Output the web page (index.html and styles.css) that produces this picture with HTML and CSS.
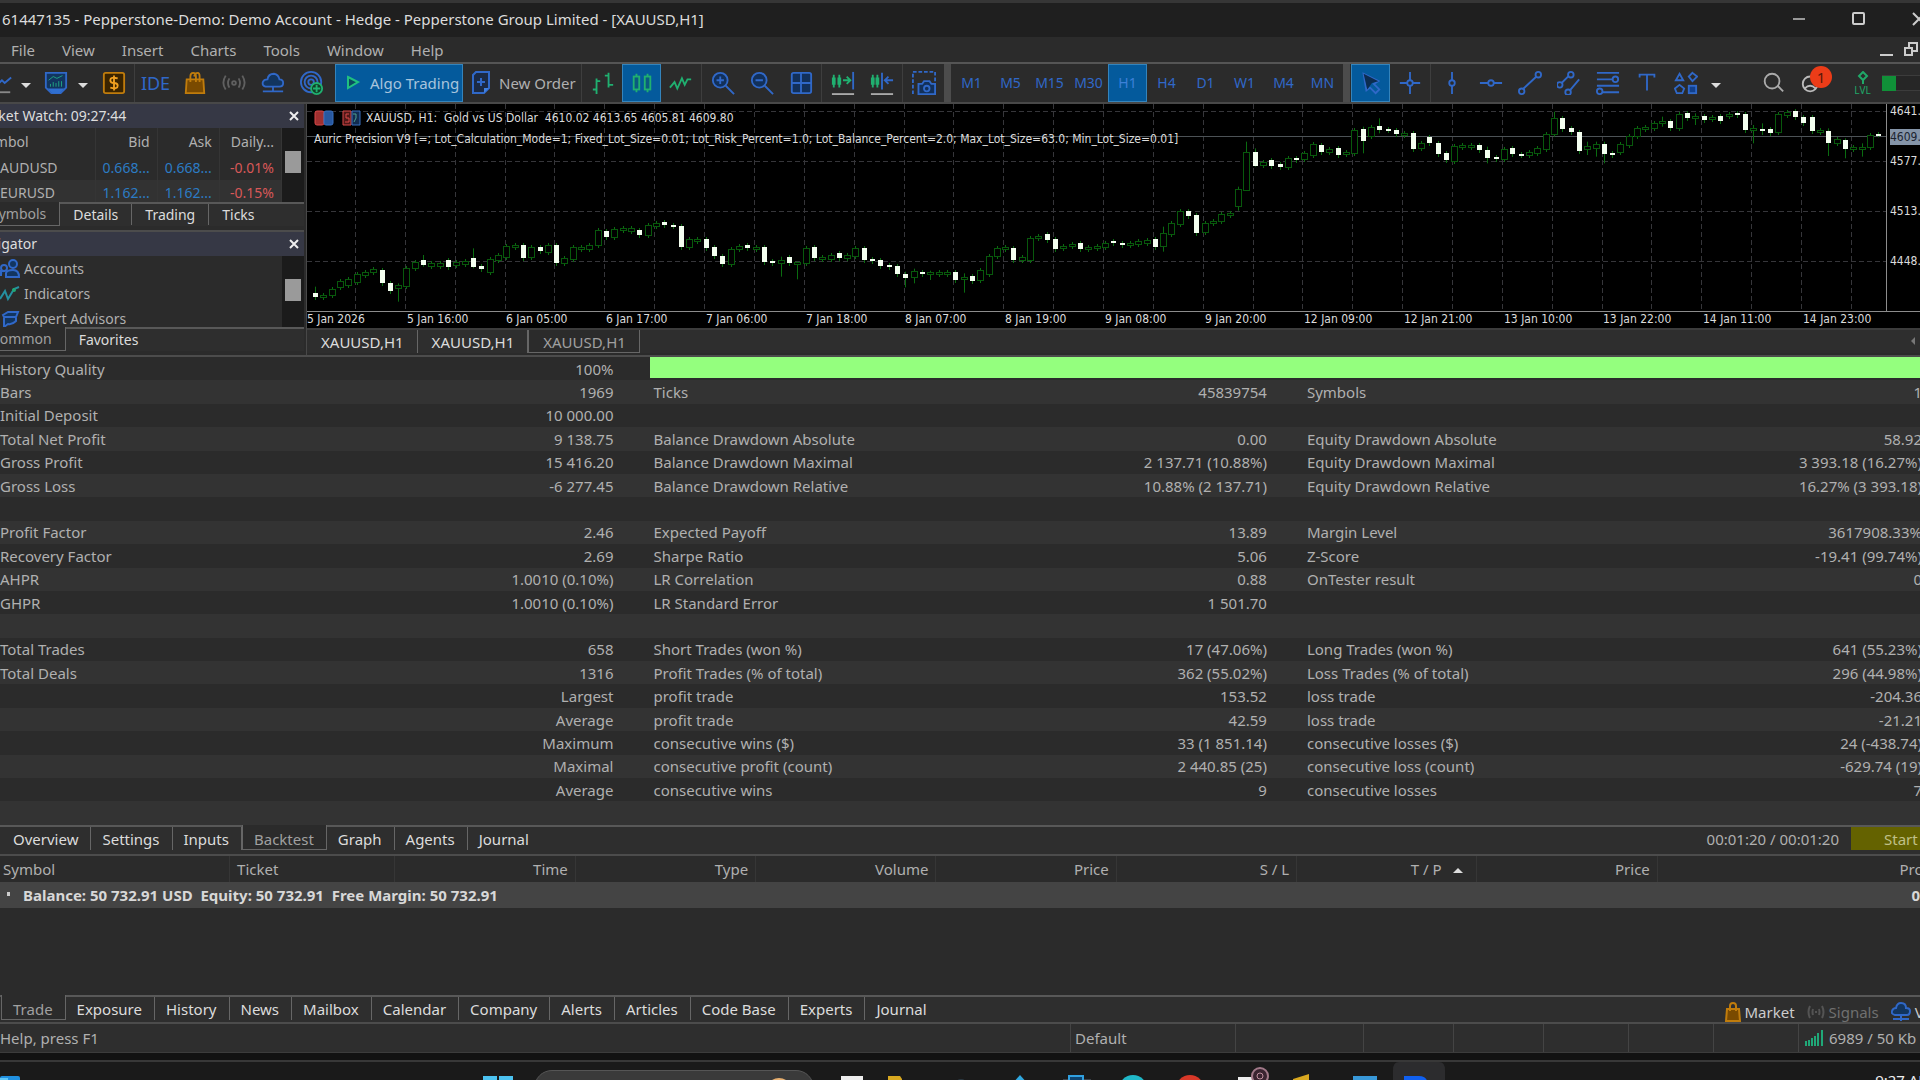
FILE: index.html
```html
<!DOCTYPE html>
<html lang="en">
<head>
<meta charset="utf-8">
<title>61447135 - Pepperstone-Demo: Demo Account - Hedge</title>
<link rel="stylesheet" href="styles.css">
</head>
<body>
<div class="app">
  <header class="titlebar">
    <h1 class="title">61447135 - Pepperstone-Demo: Demo Account - Hedge - Pepperstone Group Limited - [XAUUSD,H1]</h1>
    <div class="win-buttons">
      <button class="win-btn" aria-label="Minimize"><svg width="14" height="16"><path d="M1 8H13" stroke="#999" stroke-width="2"/></svg></button>
      <button class="win-btn" aria-label="Maximize"><svg width="14" height="16"><rect x="1" y="2" width="11" height="11" rx="1" fill="none" stroke="#ccc" stroke-width="2"/></svg></button>
      <button class="win-btn" aria-label="Close"><svg width="14" height="16"><path d="M1 2L13 14M13 2L1 14" stroke="#ccc" stroke-width="2"/></svg></button>
    </div>
  </header>

  <nav class="menubar">
    <button class="menu">File</button><button class="menu">View</button><button class="menu">Insert</button><button class="menu">Charts</button><button class="menu">Tools</button><button class="menu">Window</button><button class="menu">Help</button>
    <div class="mdi">
      <button class="mdi-btn" aria-label="Minimize chart"><svg width="14" height="16"><path d="M0 13H13" stroke="#ccc" stroke-width="2"/></svg></button>
      <button class="mdi-btn" aria-label="Restore chart"><svg width="14" height="16"><path d="M5 6V1H13V9H8M1 6H8V13H1Z" fill="none" stroke="#ccc" stroke-width="2"/></svg></button>
    </div>
  </nav>

  <div class="toolbar">
    <button class="tool tool-cut" aria-label="Chart type"><svg class="ic" viewBox="0 0 26 26"><path d="M7 17L14 10L17 13L24 7" class="b"/><path d="M7 23H23" stroke="#888" stroke-width="2"/></svg></button>
    <button class="caret caret-wide" aria-label="Chart menu"></button>
    <button class="tool tool-mid" aria-label="Templates"><svg class="ic" viewBox="0 0 26 26"><path d="M2 2H24V18L18 24H8L2 18Z" fill="#12355f" class="b"/><path d="M4 19H22L17 24H9Z" fill="#2f6fd0"/><path d="M5 10L10 6L14 8L20 5" class="g1"/><path d="M7 17V14M10 17V12M13 17V13M16 17V11M19 17V11" class="g1"/></svg></button>
    <button class="caret" aria-label="Templates menu"></button>
    <button class="tool" aria-label="Quotes"><svg class="ic" viewBox="0 0 26 26"><rect x="2" y="2" width="22" height="22" rx="2" fill="#3a2400" class="o"/><path d="M17 8Q9 6 9 10Q9 13 13 13Q17 13 17 16Q17 20 9 18M13 5V21" fill="none" stroke="#f0a020" stroke-width="2"/></svg></button>
    <i class="sep"></i>
    <button class="tool ide">IDE</button>
    <button class="tool" aria-label="Market"><svg class="ic" viewBox="0 0 26 26"><path d="M4 9H22L23 24H3Z" fill="#7a4a00" class="o"/><path d="M8 12V6Q8 2 11 2Q14 2 14 6V12M12 6Q13 2 16 2Q18 2 18 6V12" fill="none" class="o"/></svg></button>
    <button class="tool" aria-label="Signals"><svg class="ic" viewBox="0 0 26 26"><g fill="none" stroke="#606060" stroke-width="2"><path d="M4 5Q-1 13 4 20M22 5Q27 13 22 20M8 8Q5 13 8 18M18 8Q21 13 18 18"/><circle cx="13" cy="13" r="2"/></g></svg></button>
    <button class="tool" aria-label="VPS"><svg class="ic" viewBox="0 0 26 26"><path d="M5 17Q1 16 2 12Q3 9 7 9Q8 3 14 3Q19 4 20 9Q24 9 24 13Q24 17 20 17Z" fill="#12355f" class="b"/><path d="M13 17V22M2 22H24" class="b"/></svg></button>
    <button class="tool tool-last" aria-label="Community"><svg class="ic" viewBox="0 0 26 26"><g class="b" fill="none"><circle cx="12" cy="12" r="11"/><circle cx="12" cy="12" r="7"/><circle cx="12" cy="12" r="3"/></g><circle cx="18" cy="19" r="6" fill="#123d25" class="g"/><path d="M18 15V23M14 19H22" class="g"/></svg></button>
    <button class="algo on"><svg width="16" height="20" viewBox="0 0 16 20"><path d="M3 4L13 9L3 15Z" fill="#0a4a60" stroke="#20c080" stroke-width="2"/></svg>Algo Trading</button>
    <button class="order"><svg width="20" height="26" viewBox="0 0 20 26"><path d="M5 2H18V18L13 23H2V5Z" class="b" fill="#1b2a44"/><path d="M13 23V18H18Z" fill="#4080e0"/><path d="M10 8V16M6 12H14" class="b"/></svg>New Order</button>
    <i class="sep"></i>
    <button class="tool" aria-label="Bar chart"><svg class="ic" viewBox="0 0 26 26"><path d="M6 8V25M2 20H6M6 11H10M19 2V18M15 5H19M19 15H24" class="g"/></svg></button>
    <button class="tool on" aria-label="Candlesticks"><svg class="ic" viewBox="0 0 26 26"><path d="M7 3V23M19 3V23" class="g"/><rect x="4" y="6" width="6" height="14" fill="#0a5a80" class="g"/><rect x="16" y="6" width="6" height="14" fill="#0a5a80" class="g"/></svg></button>
    <button class="tool" aria-label="Line chart"><svg class="ic" viewBox="0 0 26 26"><path d="M1 18L6 12L9 19L14 8L17 15L20 9H24" class="g" fill="none"/></svg></button>
    <i class="sep"></i>
    <button class="tool" aria-label="Zoom in"><svg class="ic" viewBox="0 0 26 26"><circle cx="10" cy="10" r="8" fill="#12305a" class="b"/><path d="M16 16L25 25M6 10H14M10 6V14" class="b"/></svg></button>
    <button class="tool" aria-label="Zoom out"><svg class="ic" viewBox="0 0 26 26"><circle cx="10" cy="10" r="8" fill="#12305a" class="b"/><path d="M16 16L25 25M6 10H14" class="b"/></svg></button>
    <button class="tool" aria-label="Tile windows"><svg class="ic" viewBox="0 0 26 26"><rect x="3" y="2" width="21" height="22" rx="2" fill="#12305a" class="b"/><path d="M13 2V24M3 13H24" class="b"/></svg></button>
    <i class="sep"></i>
    <button class="tool" aria-label="Auto scroll"><svg class="ic" viewBox="0 0 26 26"><path d="M3 4V18M9 4V18M13 10H21M17 6L21 10L17 14" class="g" fill="none"/><path d="M1 7H5V15H1ZM7 7H11V15H7Z" fill="#20b070"/><path d="M24 1V20" class="b"/><path d="M1 25H25" stroke="#aaa" stroke-width="2"/></svg></button>
    <button class="tool" aria-label="Chart shift"><svg class="ic" viewBox="0 0 26 26"><path d="M3 4V18M8 4V18" class="g"/><path d="M1 7H5V15H1ZM6 7H10V15H6Z" fill="#20b070"/><path d="M13 2V20M25 10H17M20 6L16 10L20 14" class="b" fill="none"/><path d="M1 25H25" stroke="#aaa" stroke-width="2"/></svg></button>
    <i class="sep"></i>
    <button class="tool" aria-label="Screenshot"><svg class="ic" viewBox="0 0 26 26"><path d="M1 25V1H25V12" class="b" fill="none" stroke-dasharray="4 2"/><path d="M7 14H11L13 11H19L21 14H25V25H7Z" fill="#12305a" class="b"/><circle cx="16" cy="19" r="3" class="b" fill="none"/></svg></button>
    <i class="grip"></i>
    <button class="tool tf">M1</button><button class="tool tf">M5</button><button class="tool tf">M15</button><button class="tool tf">M30</button><button class="tool tf on">H1</button><button class="tool tf">H4</button><button class="tool tf">D1</button><button class="tool tf">W1</button><button class="tool tf">M4</button><button class="tool tf">MN</button>
    <i class="grip"></i>
    <button class="tool on" aria-label="Cursor"><svg class="ic" viewBox="0 0 26 26"><path d="M5 3L21 11L16 14L22 20L18 24L12 18L8 21Z" class="b"/><path d="M5 3L21 11L14 13L9 20Z" fill="#0c2c50"/></svg></button>
    <button class="tool" aria-label="Crosshair"><svg class="ic" viewBox="0 0 26 26"><path d="M13 1V10M13 16V25M2 13H10M16 13H24" class="b"/><circle cx="13" cy="13" r="3" class="b"/></svg></button>
    <i class="sep"></i>
    <button class="tool" aria-label="Vertical line"><svg class="ic" viewBox="0 0 26 26"><path d="M13 1V10M13 16V25" class="b"/><circle cx="13" cy="13" r="3" class="b" fill="none"/></svg></button>
    <button class="tool" aria-label="Horizontal line"><svg class="ic" viewBox="0 0 26 26"><path d="M1 13H10M16 13H25" class="b"/><circle cx="13" cy="13" r="3" class="b" fill="none"/></svg></button>
    <button class="tool" aria-label="Trend line"><svg class="ic" viewBox="0 0 26 26"><path d="M6 19L20 6" class="b"/><circle cx="4" cy="22" r="3" class="b" fill="none"/><circle cx="22" cy="4" r="3" class="b" fill="none"/></svg></button>
    <button class="tool" aria-label="Channel"><svg class="ic" viewBox="0 0 26 26"><path d="M5 13L13 5M14 21L24 9" class="b"/><circle cx="3" cy="15" r="3" class="b" fill="none"/><circle cx="15" cy="4" r="3" class="b" fill="none"/><circle cx="12" cy="23" r="3" class="b" fill="none"/></svg></button>
    <button class="tool" aria-label="Fibonacci"><svg class="ic" viewBox="0 0 26 26"><path d="M1 2H25M1 9H18M1 16H25M7 23H25" class="b"/><circle cx="21" cy="9" r="3" class="b" fill="none"/><circle cx="4" cy="22" r="3" class="b" fill="none"/></svg></button>
    <button class="tool" aria-label="Text"><svg class="ic" viewBox="0 0 26 26"><path d="M5 7V4H21V7M13 4V21" class="b" fill="none"/></svg></button>
    <button class="tool" aria-label="Shapes"><svg class="ic" viewBox="0 0 26 26"><path d="M6 3L10 10H2Z" class="b" fill="none"/><path d="M20 2L25 6L20 11L16 6Z" class="b" fill="none"/><path d="M6 15L11 19L9 24H3L1 19Z" class="b" fill="none"/><rect x="16" y="16" width="8" height="8" class="b" fill="#12408c"/></svg></button>
    <button class="caret" aria-label="Shapes menu"></button>
    <div class="tool-right">
      <button class="tool" aria-label="Search"><svg class="ic" viewBox="0 0 26 26"><circle cx="12" cy="11" r="8" fill="none" stroke="#aaa" stroke-width="2"/><path d="M18 16L24 22" stroke="#aaa" stroke-width="2"/></svg></button>
      <button class="tool account" aria-label="Account"><svg class="ic" viewBox="0 0 26 26"><circle cx="11" cy="14" r="8" fill="none" stroke="#bbb" stroke-width="2"/><path d="M5 19Q11 13 17 19" fill="none" stroke="#bbb" stroke-width="2"/></svg><span class="badge">1</span></button>
      <button class="tool lvl"><svg width="12" height="14" viewBox="0 0 12 14"><path d="M6 1L10 5L6 9L2 5ZM6 9V13" fill="none" stroke="#20a868" stroke-width="2"/></svg><span>LVL</span></button>
      <div class="meter"><i class="meter-fill"></i></div>
    </div>
  </div>

  <main class="workspace">
    <aside class="dock">
      <section class="panel">
        <div class="panel-head"><h2>Market Watch: 09:27:44</h2><button class="close" aria-label="Close Market Watch"><svg width="12" height="12"><path d="M2 2L10 10M10 2L2 10" stroke="#eee" stroke-width="2"/></svg></button></div>
        <div class="panel-body">
          <table class="quotes">
            <colgroup><col class="q-sym"><col class="q-num"><col class="q-num"><col class="q-num"></colgroup>
            <thead><tr><th class="q-name">Symbol</th><th class="num">Bid</th><th class="num">Ask</th><th class="num">Daily...</th></tr></thead>
            <tbody>
              <tr><td>AUDUSD</td><td class="num up">0.668...</td><td class="num up">0.668...</td><td class="num down">-0.01%</td></tr>
              <tr><td>EURUSD</td><td class="num up">1.162...</td><td class="num up">1.162...</td><td class="num down">-0.15%</td></tr>
            </tbody>
          </table>
          <div class="scroll"><i class="thumb"></i></div>
        </div>
        <div class="tabs tabs-dock"><button class="tab sel">Symbols</button><button class="tab">Details</button><button class="tab">Trading</button><button class="tab">Ticks</button></div>
      </section>
      <section class="panel">
        <div class="panel-head"><h2>Navigator</h2><button class="close" aria-label="Close Navigator"><svg width="12" height="12"><path d="M2 2L10 10M10 2L2 10" stroke="#eee" stroke-width="2"/></svg></button></div>
        <div class="panel-body">
          <ul class="tree">
            <li><svg width="20" height="20" viewBox="0 0 20 20"><circle cx="13" cy="5" r="4" fill="#12355f" class="b"/><path d="M6 18V14Q7 11 13 11Q19 11 19 18ZM1 17V12H5" fill="#12355f" class="b"/><circle cx="4" cy="9" r="3" class="b" fill="none"/></svg>Accounts</li>
            <li><svg width="20" height="20" viewBox="0 0 20 20"><path d="M0 15L5 7L8 15L14 5L19 3" fill="none" stroke="#2590a0" stroke-width="2"/><circle cx="14" cy="6" r="2" fill="#20a878"/></svg>Indicators</li>
            <li><svg width="20" height="20" viewBox="0 0 20 20"><path d="M3 6L8 3H18L16 8H4ZM4 8H16V12Q12 16 8 15L4 18Z" fill="#12355f" class="b"/></svg>Expert Advisors</li>
          </ul>
          <div class="scroll"><i class="thumb thumb-nav"></i></div>
        </div>
        <div class="tabs tabs-dock"><button class="tab sel">Common</button><button class="tab">Favorites</button></div>
      </section>
    </aside>

    <section class="charts">
      <div class="chart">
        <div class="plot-row">
          <div class="plot" id="plot">
            <div class="chart-info">
              <div class="chart-title">
                <svg width="20" height="16" viewBox="0 0 20 16"><rect x="1" y="1" width="9" height="14" rx="2" fill="#a03030" stroke="#d84848"/><rect x="10" y="1" width="9" height="14" rx="2" fill="#2858a0" stroke="#3870c0"/></svg>
                <svg width="20" height="16" viewBox="0 0 20 16"><path d="M10 1H2V15H10Z" fill="#501818" stroke="#d84848"/><path d="M11 1H19V15H11Z" fill="#122c50" stroke="#3870c0"/><path d="M8 4H5V8H8V12H4" fill="none" stroke="#d84848"/><path d="M12 4H15V8L13 12" fill="none" stroke="#50a090"/></svg>
                <span>XAUUSD, H1:&nbsp; Gold vs US Dollar&nbsp; 4610.02 4613.65 4605.81 4609.80</span>
              </div>
              <div class="chart-ea">Auric Precision V9 [=; Lot_Calculation_Mode=1; Fixed_Lot_Size=0.01; Lot_Risk_Percent=1.0; Lot_Balance_Percent=2.0; Max_Lot_Size=63.0; Min_Lot_Size=0.01]</div>
            </div>
          </div>
          <div class="prices" id="prices"></div>
        </div>
        <div class="dates" id="dates"></div>
      </div>
      <div class="tabs tabs-chart"><button class="tab">XAUUSD,H1</button><button class="tab">XAUUSD,H1</button><button class="tab sel">XAUUSD,H1</button><span class="arrow-left"></span></div>
    </section>
  </main>

  <section class="report">
    <table class="stats">
      <colgroup><col class="s-wide"><col class="s-wide"><col class="s-wide"><col class="s-wide"><col><col></colgroup>
      <tbody>
        <tr><td>History Quality</td><td>100%</td><td colspan="4" class="quality"><div class="bar"></div></td></tr>
        <tr><td>Bars</td><td>1969</td><td>Ticks</td><td>45839754</td><td>Symbols</td><td>1</td></tr>
        <tr><td>Initial Deposit</td><td>10 000.00</td><td></td><td></td><td></td><td></td></tr>
        <tr><td>Total Net Profit</td><td>9 138.75</td><td>Balance Drawdown Absolute</td><td>0.00</td><td>Equity Drawdown Absolute</td><td>58.92</td></tr>
        <tr><td>Gross Profit</td><td>15 416.20</td><td>Balance Drawdown Maximal</td><td>2 137.71 (10.88%)</td><td>Equity Drawdown Maximal</td><td>3 393.18 (16.27%)</td></tr>
        <tr><td>Gross Loss</td><td>-6 277.45</td><td>Balance Drawdown Relative</td><td>10.88% (2 137.71)</td><td>Equity Drawdown Relative</td><td>16.27% (3 393.18)</td></tr>
        <tr><td></td><td></td><td></td><td></td><td></td><td></td></tr>
        <tr><td>Profit Factor</td><td>2.46</td><td>Expected Payoff</td><td>13.89</td><td>Margin Level</td><td>3617908.33%</td></tr>
        <tr><td>Recovery Factor</td><td>2.69</td><td>Sharpe Ratio</td><td>5.06</td><td>Z-Score</td><td>-19.41 (99.74%)</td></tr>
        <tr><td>AHPR</td><td>1.0010 (0.10%)</td><td>LR Correlation</td><td>0.88</td><td>OnTester result</td><td>0</td></tr>
        <tr><td>GHPR</td><td>1.0010 (0.10%)</td><td>LR Standard Error</td><td>1 501.70</td><td></td><td></td></tr>
        <tr><td></td><td></td><td></td><td></td><td></td><td></td></tr>
        <tr><td>Total Trades</td><td>658</td><td>Short Trades (won %)</td><td>17 (47.06%)</td><td>Long Trades (won %)</td><td>641 (55.23%)</td></tr>
        <tr><td>Total Deals</td><td>1316</td><td>Profit Trades (% of total)</td><td>362 (55.02%)</td><td>Loss Trades (% of total)</td><td>296 (44.98%)</td></tr>
        <tr><td></td><td>Largest</td><td>profit trade</td><td>153.52</td><td>loss trade</td><td>-204.36</td></tr>
        <tr><td></td><td>Average</td><td>profit trade</td><td>42.59</td><td>loss trade</td><td>-21.21</td></tr>
        <tr><td></td><td>Maximum</td><td>consecutive wins ($)</td><td>33 (1 851.14)</td><td>consecutive losses ($)</td><td>24 (-438.74)</td></tr>
        <tr><td></td><td>Maximal</td><td>consecutive profit (count)</td><td>2 440.85 (25)</td><td>consecutive loss (count)</td><td>-629.74 (19)</td></tr>
        <tr><td></td><td>Average</td><td>consecutive wins</td><td>9</td><td>consecutive losses</td><td>7</td></tr>
        <tr><td></td><td></td><td></td><td></td><td></td><td></td></tr>
      </tbody>
    </table>
  </section>

  <div class="tabs tabs-tester">
    <button class="tab">Overview</button><button class="tab">Settings</button><button class="tab">Inputs</button><button class="tab sel">Backtest</button><button class="tab">Graph</button><button class="tab">Agents</button><button class="tab tab-end">Journal</button>
    <span class="elapsed">00:01:20 / 00:01:20</span><button class="start">Start</button>
  </div>

  <section class="trade">
    <table class="positions">
      <colgroup><col class="c-sym"><col class="c-tick"><col class="c-n"><col class="c-n"><col class="c-n"><col class="c-n"><col class="c-n"><col class="c-n"><col class="c-n"><col></colgroup>
      <thead><tr><th class="l">Symbol</th><th class="l">Ticket</th><th>Time</th><th>Type</th><th>Volume</th><th>Price</th><th>S / L</th><th>T / P<span class="sort"></span></th><th>Price</th><th>Profit</th></tr></thead>
      <tbody><tr><td colspan="9" class="balance"><i class="dot"></i>Balance: 50 732.91 USD&nbsp; Equity: 50 732.91&nbsp; Free Margin: 50 732.91</td><td>0.00</td></tr></tbody>
    </table>
  </section>

  <div class="tabs tabs-toolbox">
    <button class="tab sel">Trade</button><button class="tab">Exposure</button><button class="tab">History</button><button class="tab">News</button><button class="tab">Mailbox</button><button class="tab">Calendar</button><button class="tab">Company</button><button class="tab">Alerts</button><button class="tab">Articles</button><button class="tab">Code Base</button><button class="tab">Experts</button><button class="tab">Journal</button>
    <div class="services">
      <a href="#market" class="svc"><svg width="16" height="20" viewBox="0 0 16 20"><path d="M2 7H14L15 19H1Z" fill="#7a4a00" class="o"/><path d="M5 9V4Q5 1 8 1Q11 1 11 4V9" class="o" fill="none"/></svg>Market</a>
      <a href="#signals" class="svc dim"><svg width="18" height="14" viewBox="0 0 18 14"><path d="M3 1Q0 7 3 13M15 1Q18 7 15 13M6 4Q5 7 6 10M12 4Q13 7 12 10M9 6V8" fill="none" stroke="#545454" stroke-width="2"/></svg>Signals</a>
      <a href="#vps" class="svc vps"><svg width="20" height="22" viewBox="0 0 20 22"><path d="M4 14Q0 13 1 10Q2 7 5 7Q6 2 10 2Q15 2 15 7Q19 7 19 10Q19 14 16 14Z" fill="#12355f" class="b"/><path d="M10 14V20M2 18H18" class="b"/></svg>VPS</a>
    </div>
  </div>

  <footer class="status">
    <span class="hint">Help, press F1</span>
    <span class="cell cell-profile">Default</span><span class="cell cell-a"></span><span class="cell cell-b"></span><span class="cell cell-b"></span><span class="cell cell-c"></span><span class="cell cell-c"></span><span class="cell cell-c"></span>
    <span class="cell cell-net"><svg width="20" height="18" viewBox="0 0 20 18"><path d="M2 17V12M5 17V11M8 17V9M11 17V7M14 17V4M18 17V1" stroke="#20a878" stroke-width="2"/></svg>6989 / 50 Kb</span>
  </footer>
  <div class="shadow"></div>

  <div class="taskbar">
    <svg class="widgets" width="20" height="24"><rect y="6" width="20" height="18" rx="2" fill="#2090e0"/><rect y="8" width="8" height="8" fill="#60c8f8"/></svg>
    <div class="task-center">
      <svg class="winlogo" width="30" height="24"><path d="M0 6H14V20H0ZM16 6H30V20H16Z" fill="#4cc2f0"/></svg>
      <label class="find"><input type="search" aria-label="Search"><svg class="avatar" width="26" height="24"><circle cx="13" cy="17" r="13" fill="#e8b070"/></svg></label>
      <div class="apps">
        <svg class="app-ic"><rect x="18" y="6" width="22" height="18" fill="#eee"/></svg>
        <svg class="app-ic"><path d="M8 6H20L22 9V24H8Z" fill="#d8a820"/></svg>
        <svg class="app-ic"><circle cx="24" cy="16" r="7" fill="#2c3a44"/></svg>
        <svg class="app-ic"><path d="M26 5L34 14H18Z" fill="#30a8e0"/></svg>
        <svg class="app-ic"><path d="M12 9H40V24H12Z" fill="#3c444c"/><path d="M18 6H32V12H18Z" fill="#0e4470" stroke="#30a0e0" stroke-width="2"/></svg>
        <svg class="app-ic"><circle cx="25" cy="19" r="14" fill="#20b8c8"/></svg>
        <svg class="app-ic"><circle cx="25" cy="19" r="14" fill="#d83828"/></svg>
        <svg class="app-ic"><rect x="16" y="7" width="14" height="16" fill="#eee"/><circle cx="38" cy="6" r="8" fill="#3a2430" stroke="#a07888" stroke-width="2"/><circle cx="38" cy="6" r="3" fill="none" stroke="#c090a0"/></svg>
        <svg class="app-ic"><path d="M14 9L30 4V20H14Z" fill="#d8a820"/></svg>
        <svg class="app-ic"><rect x="17" y="6" width="24" height="18" fill="#3898d8"/></svg>
        <svg class="app-ic"><path d="M0 24V0Q0 -8 6 -8H46Q52 -8 52 0V24Z" fill="#2c2c2e"/><path d="M11 6H26Q34 6 35 14H11Z" fill="#1060f0"/></svg>
      </div>
    </div>
    <time class="clock">9:27 AM</time>
  </div>
</div>
<script src="chart.js"></script>
</body>
</html>
```

FILE: styles.css
```css
* { box-sizing: border-box; }

body {
  margin: 0;
  background: #2b2b2b;
  color: #b0b0b0;
  font: 15px/20px "Noto Sans", "Open Sans", sans-serif;
  overflow: hidden;
}

button {
  margin: 0;
  padding: 0;
  border: 0;
  background: none;
  color: inherit;
  font: inherit;
}

h1, h2 { margin: 0; font: inherit; }
svg { display: block; flex: none; }

.app { display: flex; flex-direction: column; height: 100vh; overflow: hidden; white-space: nowrap; }
.app > * { flex: none; }

.b { stroke: #3068c8; stroke-width: 2; }
.g { stroke: #20b070; stroke-width: 2; }
.g1 { stroke: #22a884; stroke-width: 1; fill: none; }
.o { stroke: #c07c0c; stroke-width: 2; }

/* title and menu */
.titlebar {
  display: flex;
  justify-content: space-between;
  height: 37px;
  padding-left: 2px;
  border-top: 3px solid #363636;
  background: #1f1f1f;
  overflow: hidden;
}
.title { color: #dcdcdc; line-height: 32px; }
.win-buttons { display: flex; align-items: center; height: 32px; gap: 46px; margin-right: -6px; }
.menubar { display: flex; height: 27px; border-bottom: 2px solid #555; }
.menu { padding: 0 14px 0 13px; line-height: 26px; }
.menu:first-child { padding-left: 11px; }
.mdi { display: flex; align-items: center; gap: 10px; margin: 0 2px 0 auto; }

/* toolbar */
.toolbar { display: flex; align-items: center; height: 40px; border-bottom: 2px solid #484848; overflow: hidden; }
.tool {
  display: flex;
  align-items: center;
  justify-content: center;
  flex: none;
  width: 39px;
  height: 38px;
}
.ic { width: 24px; height: 24px; fill: none; }
.tool-cut { width: 13px; justify-content: flex-end; overflow: hidden; }
.tool-mid { width: 33px; }
.tool-last { margin-right: 4px; }
.caret { display: flex; justify-content: center; width: 22px; flex: none; padding-top: 4px; }
.caret-wide { width: 26px; }
.caret::before { content: ""; border: 5px solid transparent; border-top-color: #ddd; border-bottom: 0; }
.sep { width: 1px; height: 38px; margin: 0 1px; background: #3e3e3e; flex: none; }
.grip { width: 7px; height: 38px; margin: 0 1px; background: #4c4c4c; flex: none; }
.on { background: #045a9c; box-shadow: inset 0 0 0 1px #3484bc; }
.ide { color: #3068c8; font-size: 18px; }
.tf { color: #3068c8; font-size: 14px; }
.tf.on { color: #3c80d8; }
.algo, .order { display: flex; align-items: center; height: 38px; flex: none; }
.algo { width: 128px; padding-left: 10px; gap: 9px; color: #a8c4dc; }
.order { width: 117px; padding-left: 8px; gap: 8px; }
.tool-right { display: flex; align-items: center; margin-left: auto; }
.account { position: relative; }
.badge {
  position: absolute;
  left: 18px;
  top: 2px;
  width: 22px;
  height: 22px;
  border-radius: 11px;
  background: #ec3c18;
  color: #5a1808;
  line-height: 22px;
  text-align: center;
}
.lvl { flex-direction: column; margin-left: 12px; color: #20a868; font-size: 10px; line-height: 10px; }
.meter { width: 38px; height: 16px; background: #262626; border-top: 1px solid #3c3c3c; border-bottom: 1px solid #3c3c3c; }
.meter-fill { display: block; width: 14px; height: 15px; background: #109038; }

/* docked panels */
.workspace { display: flex; height: 253px; border-bottom: 2px solid #4c4c4c; }
.dock { display: flex; flex-direction: column; gap: 4px; width: 307px; padding-right: 2px; border-right: 1px solid #484848; overflow: hidden; font-size: 14px; }
.panel { overflow: hidden; }
.panel + .panel { border-top: 2px solid #4c4c4c; }
.panel-head { display: flex; justify-content: space-between; align-items: center; height: 24px; background: #363845; color: #ddd; }
.panel-head h2 { margin-left: -28px; }
.close { padding: 0 4px; }
.panel-body { display: flex; justify-content: space-between; height: 74px; overflow: hidden; }
.panel + .panel .panel-body { height: 71px; }
.scroll { width: 22px; padding: 23px 3px 0; background: #1b1b1b; }
.thumb { display: block; height: 22px; background: #9a9a9a; }
.quotes { width: 282px; table-layout: fixed; border-collapse: collapse; }
.q-sym { width: 95px; }
.quotes th, .quotes td { height: 25px; padding: 0; text-align: left; font-weight: 400; border-right: 1px solid #353535; }
.quotes th { height: 27px; }
.q-name { text-indent: -20px; }
.quotes .num { text-align: right; padding-right: 7px; }
.quotes tbody tr:nth-child(even) { background: #323232; }
.quotes .up { color: #2c7cc4; }
.quotes .down { color: #d85858; }
.tree { margin: 0; padding: 0; list-style: none; }
.tree li { display: flex; align-items: center; gap: 4px; height: 25px; }

/* tab strips */
.tabs { display: flex; border-top: 2px solid #585858; background: #2e2e2e; }
.tab { height: 23px; padding: 0 12px 0 11px; color: #dcdcdc; border-right: 1px solid #666; }
.tab:last-of-type, .tab-end { border-right: 0; }
.tab.sel { margin-top: -2px; height: 25px; padding-top: 3px; border: 1px solid #666; border-top: 0; background: #2b2b2b; color: #a0a0a0; }
.tabs-dock { height: 24px; margin-left: -23px; }
.tabs-dock .tab { padding: 0 13px; height: 21px; line-height: 20px; }
.tabs-dock .tab.sel { height: 24px; line-height: 22px; padding-top: 1px; }

/* chart */
.charts { flex: 1; min-width: 0; display: flex; flex-direction: column; }
.chart { height: 224px; background: #000; color: #dcdcdc; font-family: "DejaVu Sans Condensed", "DejaVu Sans", sans-serif; font-size: 12px; overflow: hidden; }
.plot-row { display: flex; height: 208px; border-bottom: 1px solid #8c8c8c; }
.plot { position: relative; flex: 1; min-width: 0; border-right: 1px solid #8c8c8c; overflow: hidden; }
.candles { position: absolute; left: 0; top: 0; width: 100%; height: 100%; }
.chart-info { position: relative; z-index: 1; padding: 6px 7px; }
.chart-title { display: flex; align-items: center; gap: 7px; height: 16px; }
.chart-title span { margin-left: -2px; }
.chart-ea { margin-top: 4px; line-height: 18px; }
.prices { position: relative; width: 33px; overflow: hidden; }
.price { position: absolute; left: 0; width: 100%; padding-left: 3px; line-height: 16px; }
.price-now { background: #8494a8; color: #1c2430; margin-left: 3px; padding-left: 0; }
.dates { display: flex; height: 16px; line-height: 15px; overflow: hidden; }
.date { flex: none; }
.tabs-chart { height: 25px; border-top-color: #3c3c3c; align-items: flex-start; }
.tabs-chart .tab { margin-top: 0; border-top: 0; height: 23px; padding: 1px 13px 0 14px; }
.arrow-left { margin: 7px 5px 0 auto; border: 4px solid transparent; border-right-color: #777; border-left: 0; }

/* strategy tester report */
.app > .report { flex: 1 1 440px; min-height: 0; }
.stats { width: calc(100% + 2px); height: 100%; border-collapse: collapse; table-layout: fixed; }
.s-wide { width: 17%; }
.stats tr { height: 5%; }
.stats td { padding: 0; line-height: 20px; }
.stats td:nth-child(even) { text-align: right; padding-right: 40px; }
.stats td:nth-child(6) { padding-right: 0; }
.stats tr:nth-child(even) { background: #333; }
.stats .quality { vertical-align: top; }
.bar { height: 21px; margin-left: -3px; background: #94ff7e; }
.tabs-tester { height: 31px; padding-left: 2px; border-bottom: 2px solid #4c4c4c; }
.elapsed { margin: 1px 12px 0 auto; line-height: 22px; }
.start { width: 69px; height: 23px; padding-left: 33px; text-align: left; background: #646200; color: #c0c088; }

/* toolbox */
.trade { height: 139px; overflow: hidden; }
.positions { width: calc(100% + 26px); border-collapse: collapse; table-layout: fixed; }
.c-sym { width: 11.8%; }
.c-tick { width: 8.5%; }
.c-n { width: 9.27%; }
.positions th { height: 26px; padding: 0 7px; font-weight: 400; text-align: right; border-right: 1px solid #363636; }
.positions .l { text-align: left; }
.positions th:first-child { padding-left: 3px; }
.positions td { height: 26px; padding: 0 4px 0 7px; background: #444; color: #d8d8d8; font-weight: 700; text-align: right; }
.positions .balance { text-align: left; }
.dot { display: inline-block; width: 3px; height: 4px; margin-right: 13px; vertical-align: 5px; background: #ccc; }
.sort { display: inline-block; margin: 0 6px 2px 12px; border: 5px solid transparent; border-bottom-color: #ddd; border-top: 0; }
.tabs-toolbox { height: 29px; padding-left: 1px; border-bottom: 2px solid #4c4c4c; }
.services { display: flex; align-items: center; gap: 12px; margin: 4px -21px 0 auto; }
.svc { display: flex; align-items: center; gap: 4px; color: #ccc; text-decoration: none; }
.dim { color: #707070; }

/* status line */
.status { display: flex; height: 28px; line-height: 28px; background: #2e2e2e; }
.hint { flex: 1; }
.cell { border-left: 1px solid #444; padding-left: 4px; }
.cell-profile { width: 165px; }
.cell-a { width: 128px; }
.cell-b { width: 90px; }
.cell-c { width: 85px; }
.cell-net { display: flex; align-items: center; gap: 5px; width: 122px; padding-left: 5px; }
.shadow { height: 10px; background: #121212; border-top: 1px solid #3c3c3c; border-bottom: 2px solid #383838; }

/* desktop taskbar, cut by the bottom of the screen */
.taskbar { display: flex; justify-content: space-between; height: 18px; background: #1a1a1a; overflow: hidden; }
.widgets { margin-top: 8px; }
.task-center { display: flex; margin-left: 38px; }
.winlogo { margin: 8px 21px 0 0; }
.find { display: flex; justify-content: flex-end; position: relative; width: 280px; height: 36px; margin-top: 8px; border: 1px solid #555; border-radius: 18px; background: #3a3a3a; }
.find input { position: absolute; inset: 0; opacity: 0; }
.avatar { margin: 3px 21px 0 0; }
.apps { display: flex; margin-left: 9px; }
.app-ic { width: 57px; height: 24px; margin-top: 8px; overflow: visible; }
.clock { margin: 8px -12px 0 0; color: #eee; }
```

FILE: chart.js
```javascript
// Each candle: kind (w = bearish, filled; g = bullish, hollow), body top, body bottom,
// and optional wick top and bottom. Vertical units are thirds of a pixel from the window top.
const candles = `w 880 890 860 900;g 884 890;g 866 886;g 842 860;g 838 855;g 822 845;g 815 825;g 808 816;w 810 850;w 850 872;
g 855 865 850 905;g 805 858;g 785 805;w 780 796 765 800;g 790 798;g 788 798;w 780 802;g 785 796;g 784 792;w 773 800 745 805;
w 798 808;g 776 815;g 765 780;g 737 770;g 735 740;w 735 773;g 740 770;w 740 752;g 735 755;w 735 788;
g 775 788;g 742 776;g 740 746;g 735 748;g 690 735;w 692 712;g 688 710;g 684 690;g 684 692;w 690 706;
g 675 706;g 670 678;w 667 676;w 674 678;w 678 742;g 718 742;g 716 722;w 717 745;w 741 768;w 768 793;
g 748 793;g 738 748;w 736 745;g 741 746;w 742 785;w 784 790;g 780 788 770 830;w 772 789;g 785 790 785 838;g 745 788;
w 742 774;g 770 778;g 765 778;w 760 773;g 765 775;g 745 768;w 743 780;w 778 783;w 781 797;w 796 801;
w 798 822;w 822 833 815 862;g 812 832 806 850;w 816 822;g 817 821 812 840;g 817 821;g 815 822;w 815 840;g 830 836 820 878;w 828 842;
g 810 840;g 768 822;g 745 768;g 742 748;w 743 780;g 772 780;g 713 780;g 708 715;w 701 720;w 718 746;
g 738 745;g 733 738;w 730 746;g 741 746;g 738 745;g 728 742;w 722 730;w 730 735;g 728 734;g 724 732;
g 720 728;w 717 741;g 700 738 680 755;g 668 702;g 632 672;w 632 648;w 645 698;g 668 695;g 662 668;g 642 662;
g 638 645;g 568 617 560 632;g 455 570 425 572;w 455 497 445 500;g 486 495;w 480 497;w 492 500;g 475 500;w 474 480;g 460 478;
g 432 465;w 434 456;g 446 456;w 444 466;g 455 462;g 390 458;w 388 423 380 460;g 380 408;w 378 390 355 400;w 387 391;
w 391 403;g 399 404;w 400 447;g 430 445;w 410 430;w 430 461;w 458 480;g 438 482;g 436 441;g 434 440;
w 434 450;w 449 474 440 490;w 471 476;g 448 478;w 445 461;w 461 466;g 456 466;g 445 460;g 402 447;g 355 402 335 410;
w 355 388;w 384 397;w 397 453;g 438 448 425 465;g 432 445 425 470;w 431 461 425 490;w 460 465;g 432 455;g 408 436;g 385 408;
g 382 388;g 368 385;g 362 368 350 380;w 362 384;g 342 384;w 340 353;g 347 352 340 375;w 348 360;g 350 356;w 348 362;
g 342 348;w 338 344;w 342 390;g 385 390 375 430;w 387 392 370 405;w 388 398;g 343 396;g 335 345;w 332 352;w 350 368;
w 352 392;g 390 396;w 392 430 385 468;g 418 428;w 420 448 415 475;g 442 448;g 440 448 430 470;g 404 440;w 403 408 396 412`
  .split(";").map(s => s.trim().split(" "));

const NS = "http://www.w3.org/2000/svg";
const plot = document.getElementById("plot");
const svg = document.createElementNS(NS, "svg");
svg.setAttribute("class", "candles");

function add(name, attrs) {
  const el = document.createElementNS(NS, name);
  for (const key in attrs) el.setAttribute(key, attrs[key]);
  svg.appendChild(el);
}

const TOP = 104;
const STEP = 8.315;
const LABEL_STEP = 99.73;
const gridRows = [[7, "4641."], [57, "4577."], [107, "4513."], [157, "4448."]];

for (const [y] of gridRows)
  add("path", { d: `M0 ${y + .5}H4000`, stroke: "#36363a", "stroke-dasharray": "5 3" });
for (let i = 0; i < 80; i++)
  add("path", { d: `M${Math.round(48 + i * LABEL_STEP / 2) + .5} 0V208`, stroke: "#36363a", "stroke-dasharray": "5 3" });
add("path", { d: "M0 32.5H4000", stroke: "#4c5256" });

candles.forEach(([kind, a, b, wa, wb], i) => {
  const x = Math.round(8 + i * STEP);
  const y1 = Math.round(a / 3 - TOP), y2 = Math.round(b / 3 - TOP);
  const h = Math.max(y2 - y1, 2);
  const w1 = wa ? wa / 3 - TOP : y1 - 2, w2 = wb ? wb / 3 - TOP : y2 + 3;
  add("path", { d: `M${x + .5} ${w1}V${w2}`, stroke: "#0a6c10" });
  if (kind === "w") add("rect", { x: x - 2, y: y1, width: 5, height: h, fill: "#f4fff0" });
  else add("rect", { x: x - 2.5, y: y1 + .5, width: 6, height: h, fill: "#000", stroke: "#08580c" });
});
plot.appendChild(svg);

const prices = document.getElementById("prices");
function price(y, text, cls) {
  const el = document.createElement("span");
  el.className = cls;
  el.style.top = (y - 8) + "px";
  el.textContent = text;
  prices.appendChild(el);
}
gridRows.forEach(([y, t]) => price(y, t, "price"));
price(33, "4609.", "price price-now");

const dates = document.getElementById("dates");
["5 Jan 2026", "5 Jan 16:00", "6 Jan 05:00", "6 Jan 17:00", "7 Jan 06:00", "7 Jan 18:00", "8 Jan 07:00", "8 Jan 19:00",
 "9 Jan 08:00", "9 Jan 20:00", "12 Jan 09:00", "12 Jan 21:00", "13 Jan 10:00", "13 Jan 22:00", "14 Jan 11:00", "14 Jan 23:00"]
  .forEach((t, i) => {
    const el = document.createElement("span");
    el.className = "date";
    el.style.width = Math.round((i + 1) * LABEL_STEP) - Math.round(i * LABEL_STEP) + "px";
    el.textContent = t;
    dates.appendChild(el);
  });
```
